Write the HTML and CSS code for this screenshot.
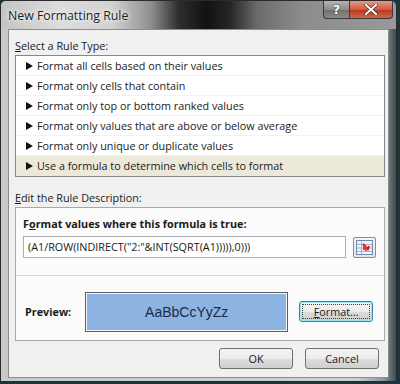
FILE: index.html
```html
<!DOCTYPE html>
<html lang="en">
<head>
    <meta charset="UTF-8">
    <title>New Formatting Rule</title>
    <link rel="stylesheet" href="styles.css">
</head>
<body>
    <div class="window">
        <div class="titlebar">
            <span class="title">New Formatting Rule</span>
            <div class="caption-btns">
                <span class="cap-btn cap-help">?</span>
                <span class="cap-btn cap-close">
                    <svg width="14" height="11" viewBox="0 0 14 11">
                        <path d="M2 1 L12 10 M12 1 L2 10" stroke="#4a1a10" stroke-width="3.4" stroke-linecap="round"/>
                        <path d="M2 1 L12 10 M12 1 L2 10" stroke="#fff" stroke-width="2.2" stroke-linecap="round"/>
                    </svg>
                </span>
            </div>
        </div>

        <div class="client">
            <div class="label"><u>S</u>elect a Rule Type:</div>
            <ul class="rule-list">
                <li>Format all cells based on their values</li>
                <li>Format only cells that contain</li>
                <li>Format only top or bottom ranked values</li>
                <li>Format only values that are above or below average</li>
                <li>Format only unique or duplicate values</li>
                <li class="selected">Use a formula to determine which cells to format</li>
            </ul>

            <div class="label"><u>E</u>dit the Rule Description:</div>
            <div class="desc-box">
                <div class="desc-top">
                    <div class="bold-label">F<u>o</u>rmat values where this formula is true:</div>
                    <div class="formula-row">
                        <div class="formula-input">(A1/ROW(INDIRECT("2:"&amp;INT(SQRT(A1))))),0)))</div>
                        <span class="ref-btn">
                            <svg width="17" height="15" viewBox="0 0 17 15">
                                <rect x="0.5" y="0.5" width="16" height="14" fill="#eef3f9" stroke="#6f8aa8"/>
                                <path d="M1 4.5 H16 M1 8 H16 M1 11.5 H16" stroke="#9fb3c9"/>
                                <path d="M5.5 1 V14" stroke="#9fb3c9"/>
                                <path d="M7 4 L12 9 L13 6 M12 9 L9 10" stroke="#d21c1c" stroke-width="2" fill="none"/>
                                <rect x="7" y="6" width="4" height="4" fill="#e43a3a"/>
                            </svg>
                        </span>
                    </div>
                </div>
                <div class="desc-bottom">
                    <span class="bold-label">Preview:</span>
                    <div class="preview">AaBbCcYyZz</div>
                    <span class="btn btn-focus"><u>F</u>ormat...</span>
                </div>
            </div>

            <div class="dialog-btns">
                <span class="btn">OK</span>
                <span class="btn">Cancel</span>
            </div>
        </div>
    </div>
</body>
</html>
```

FILE: styles.css
```css
body {
    margin: 0;
    background-color: #1b363c;
    font-family: "Open Sans", sans-serif;
    font-size: 10.8px;
    color: #1a1a1a;
}

.window {
    width: 397px;
    height: 382px;
    box-sizing: border-box;
    border: 1px solid #2b2b2b;
    border-radius: 6px 6px 0 0;
    background: linear-gradient(to right, #c9c9c9 0%, #cfcfcf 90%, #8a9596 97%, #3c4c50 100%);
    display: flex;
    flex-direction: column;
    overflow: hidden;
}

.titlebar {
    height: 28px;
    display: flex;
    align-items: flex-start;
    background: linear-gradient(to right, #c4c4c4 0%, #dcdcdc 15%, #d2d2d2 28%, #8e8e8e 38%, #2e2e2e 45%, #121212 52%, #262626 58%, #6c6c6c 65%, #8c8c8c 76%, #999999 100%);
}

.title {
    padding: 6px 0 0 7px;
    font-size: 12.3px;
    color: #1c1c1c;
    text-shadow: 0 0 6px #f4f4f4, 0 0 3px #ffffff;
}

.caption-btns {
    margin-left: auto;
    margin-right: 3px;
    display: flex;
}

.cap-btn {
    height: 18px;
    display: flex;
    align-items: center;
    justify-content: center;
    box-sizing: border-box;
    border: 1px solid #3a3a3a;
    border-top: none;
}

.cap-help {
    width: 26px;
    border-radius: 0 0 0 4px;
    border-right: none;
    background: linear-gradient(#b5b5b5, #8c8c8c 50%, #6e6e6e 51%, #8c8c8c);
    color: #fff;
    font-family: "DejaVu Sans", sans-serif;
    font-weight: bold;
    font-size: 12px;
    text-shadow: 0 0 2px #222;
}

.cap-close {
    width: 44px;
    border-radius: 0 0 4px 0;
    background: linear-gradient(#e59a86, #cf5a41 50%, #b8341c 51%, #d0674a);
}

.client {
    flex: 1;
    margin: 0 7px 3px 7px;
    background-color: #f0f0f0;
    border: 1px solid #8c8c8c;
    padding: 9px 3px 0 6px;
}

.label {
    line-height: 14px;
    margin-bottom: 2px;
}

.rule-list {
    list-style: none;
    margin: 0 0 14px 0;
    padding: 0;
    width: 368px;
    background-color: #fff;
    border: 1px solid #828790;
}

.rule-list li {
    height: 20px;
    line-height: 20px;
    box-sizing: border-box;
    border-bottom: 1px solid #f2f2f2;
    padding-left: 10px;
    display: flex;
    align-items: center;
    gap: 4px;
}

.rule-list li:last-child {
    border-bottom: none;
}

.rule-list li::before {
    content: "";
    width: 0;
    height: 0;
    border-left: 7px solid #111;
    border-top: 4px solid transparent;
    border-bottom: 4px solid transparent;
}

.rule-list li.selected {
    background-color: #ece9da;
}

.desc-box {
    width: 368px;
    height: 132px;
    background-color: #fbfbfb;
    border: 1px solid #a9a9a9;
    display: flex;
    flex-direction: column;
}

.bold-label {
    font-weight: bold;
    line-height: 14px;
}

.desc-top {
    height: 68px;
    padding: 9px 0 0 7px;
    box-sizing: border-box;
    border-bottom: 1px solid #cad9e8;
}

.formula-row {
    display: flex;
    align-items: center;
    margin-top: 5px;
}

.formula-input {
    width: 323px;
    height: 22px;
    box-sizing: border-box;
    border: 1px solid #abadb3;
    background-color: #fff;
    padding-left: 4px;
    line-height: 20px;
    white-space: nowrap;
    overflow: hidden;
}

.ref-btn {
    margin-left: 7px;
    width: 23px;
    height: 21px;
    box-sizing: border-box;
    border: 1px solid #7e8fa3;
    border-radius: 2px;
    background: linear-gradient(#f6f8fb, #dde6f0);
    display: flex;
    align-items: center;
    justify-content: center;
}

.desc-bottom {
    flex: 1;
    display: flex;
    align-items: center;
    padding-left: 9px;
    padding-top: 7px;
}

.preview {
    width: 203px;
    height: 40px;
    box-sizing: border-box;
    margin-left: 14px;
    border: 1px solid #5e5e5e;
    box-shadow: inset 0 0 0 1px #f4f4f4;
    background-color: #8db3e2;
    display: flex;
    align-items: center;
    justify-content: center;
    font-family: "Liberation Sans", sans-serif;
    font-size: 14px;
    color: #1c2a48;
}

.btn {
    width: 74px;
    height: 21px;
    box-sizing: border-box;
    border: 1px solid #707070;
    border-radius: 3px;
    background: linear-gradient(#f3f3f3, #ebebeb 50%, #dddddd 51%, #cfcfcf);
    display: flex;
    align-items: center;
    justify-content: center;
}

.btn-focus {
    margin-left: 11px;
    border-color: #3c7fb1;
    box-shadow: inset 0 0 0 1px #9ee4f7;
    outline: 1px dotted #444;
    outline-offset: -4px;
}

.dialog-btns {
    display: flex;
    justify-content: flex-end;
    gap: 12px;
    margin-top: 7px;
    padding-right: 6px;
}
```
